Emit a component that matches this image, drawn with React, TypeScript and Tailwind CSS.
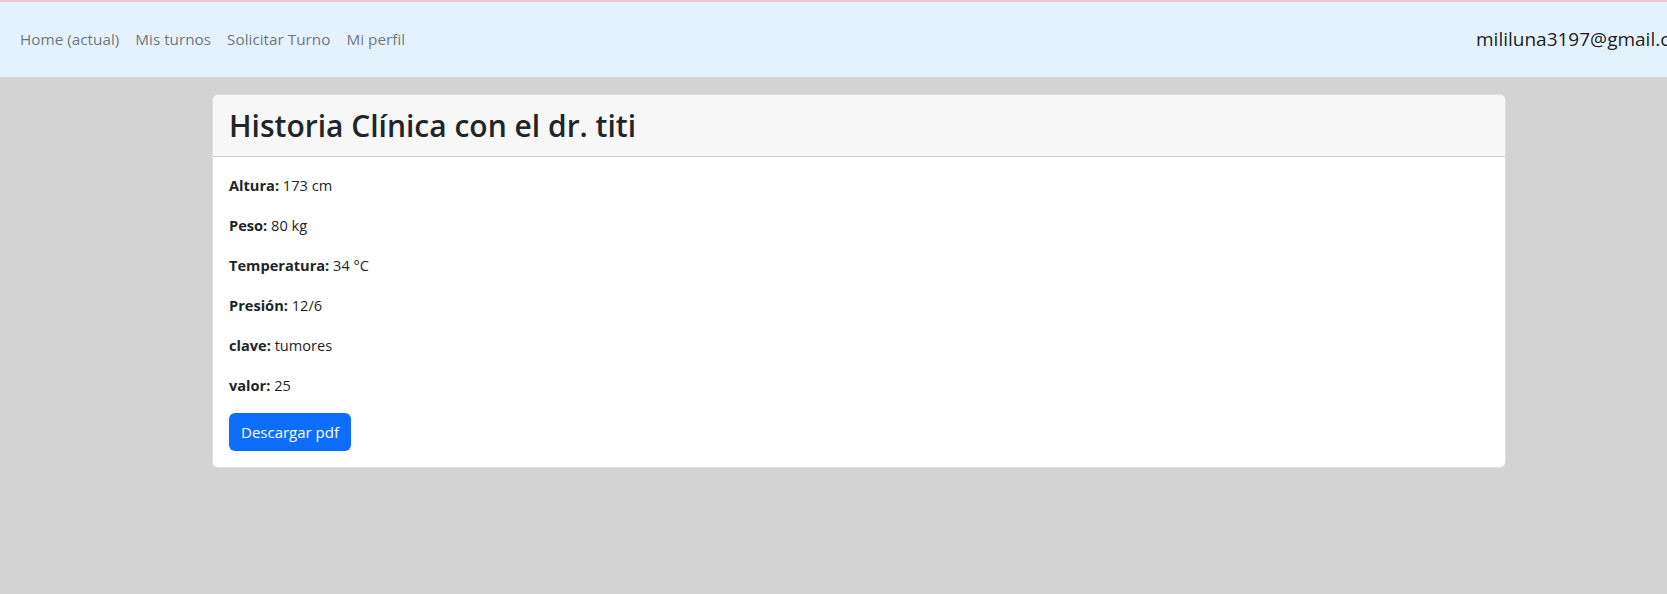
import React from 'react';

const rows = [
  { label: 'Altura:', value: '173 cm' },
  { label: 'Peso:', value: '80 kg' },
  { label: 'Temperatura:', value: '34 °C' },
  { label: 'Presión:', value: '12/6' },
  { label: 'clave:', value: 'tumores' },
  { label: 'valor:', value: '25' },
];

const links = ['Home (actual)', 'Mis turnos', 'Solicitar Turno', 'Mi perfil'];

export default function App() {
  return (
    <div
      className="min-h-[594px] w-full overflow-hidden bg-[#d3d3d3] text-[#212529]"
      style={{ fontFamily: '"Open Sans", "Noto Sans", sans-serif' }}
    >
      <div className="h-[2px] bg-[#f1c6cc]" />
      <nav className="flex h-[75px] items-center overflow-hidden bg-[#e3f2fd] pl-[12px]">
        <ul className="flex w-[1464px] shrink-0 items-center">
          {links.map((l) => (
            <li key={l}>
              <a className="block px-[8px] text-[15.3px] text-black/55">{l}</a>
            </li>
          ))}
        </ul>
        <span className="shrink-0 whitespace-nowrap text-[19px] text-black/90">
          mililuna3197@gmail.com
        </span>
      </nav>

      <div className="ml-[212px] mt-[17px] w-[1294px] rounded-[6px] border border-black/[0.12] bg-white">
        <div className="flex h-[62px] items-center rounded-t-[6px] border-b border-black/[0.17] bg-[#f7f7f7] px-[16px]">
          <h2 className="text-[30px] font-semibold leading-none">Historia Clínica con el dr. titi</h2>
        </div>
        <div className="p-[16px]">
          {rows.map((r) => (
            <p key={r.label} className="mb-[16px] text-[14.6px] leading-[24px]">
              <b className="font-bold">{r.label}</b> {r.value}
            </p>
          ))}
          <button className="h-[38px] rounded-[6px] bg-[#0d6efd] px-[12px] text-[15px] text-white">
            Descargar pdf
          </button>
        </div>
      </div>
    </div>
  );
}
